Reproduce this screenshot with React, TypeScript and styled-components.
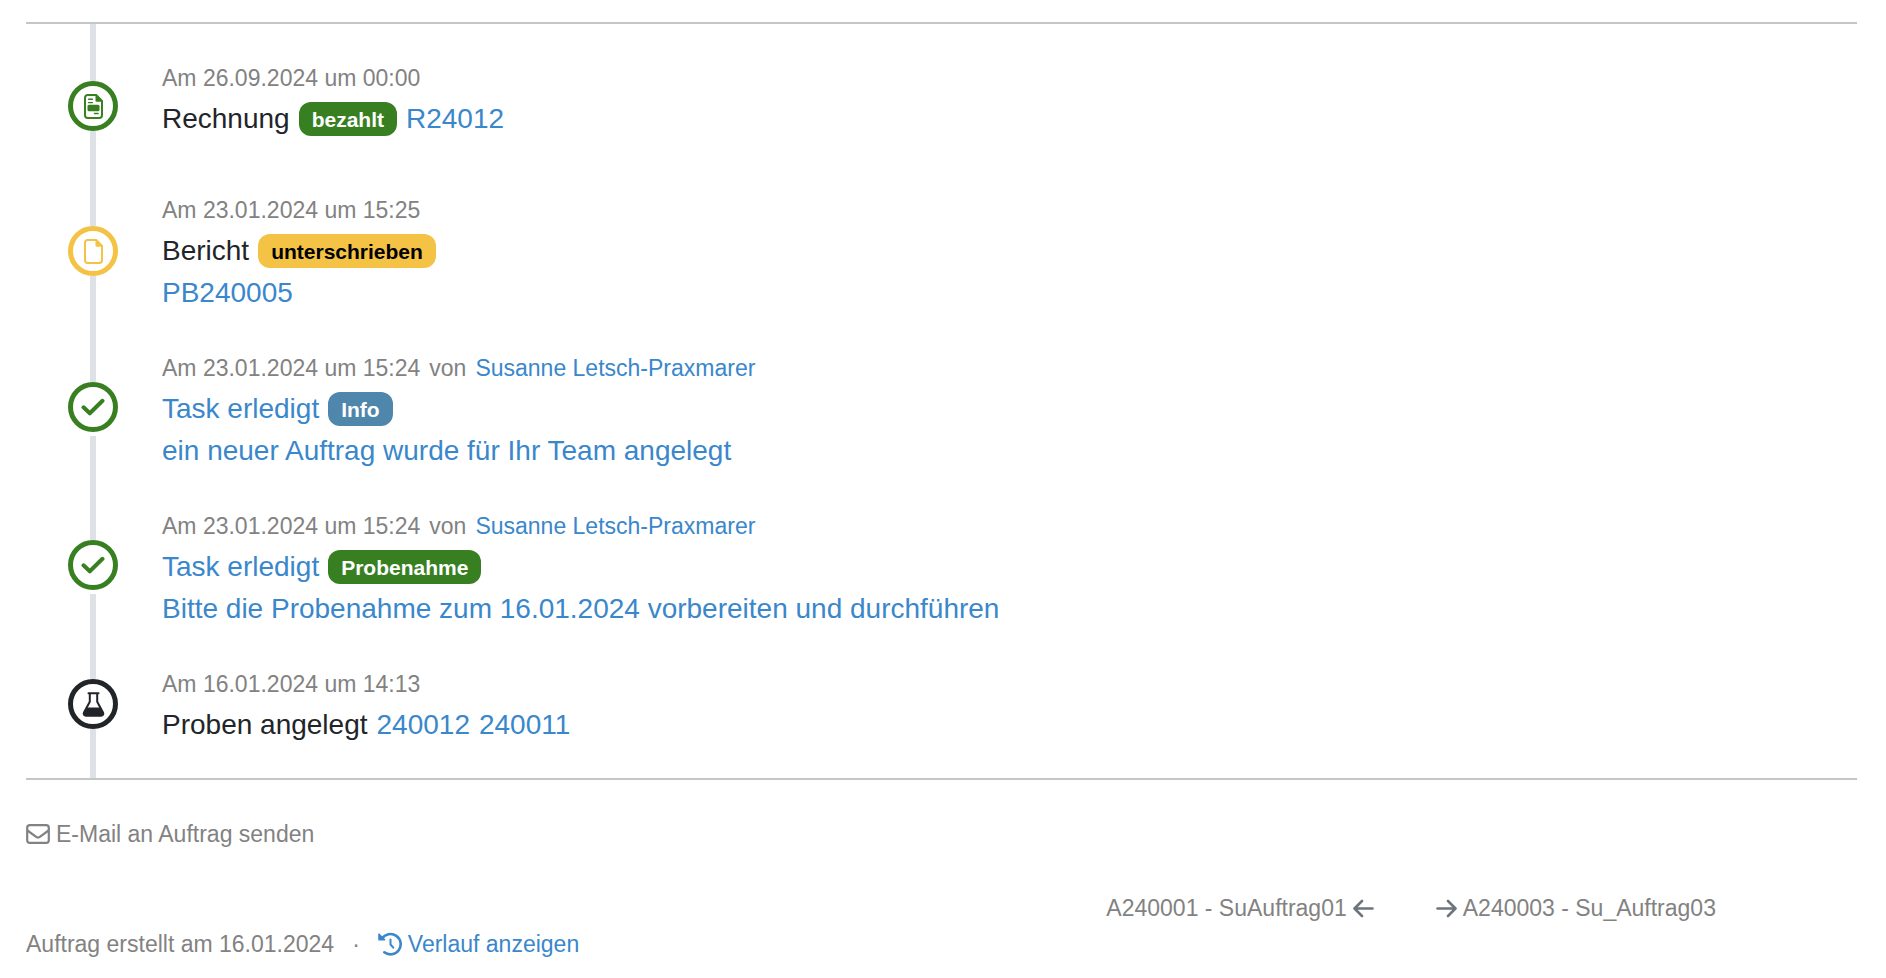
import React from "react";
import styled, { createGlobalStyle } from "styled-components";

const color = {
  text: "#212529",
  muted: "#828282",
  arrow: "#6c757d",
  link: "#3a87cb",
  rule: "#c6c6c6",
  rail: "#dee2e6",
  green: "#387f22",
  yellow: "#f4c244",
  blue: "#4f86ab",
};

const GlobalStyle = createGlobalStyle`
  * { box-sizing: border-box; }
  body {
    margin: 0;
    background: #fff;
    color: ${color.text};
    font-family: "Liberation Sans", Arial, Helvetica, sans-serif;
    font-size: 28px;
    line-height: 42px;
  }
`;

const Page = styled.main`
  padding: 22px 29px 0 26px;
`;

const Timeline = styled.ol`
  list-style: none;
  margin: 0;
  padding: 0 0 0 42px;
  border-top: 2px solid ${color.rule};
  border-bottom: 2px solid ${color.rule};
`;

const Entry = styled.li`
  display: flex;
  gap: 44px;
`;

const Rail = styled.div`
  display: flex;
  flex-direction: column;
  align-items: center;
  flex: none;
  width: 50px;
`;

const RailStart = styled.span<{ $length: number }>`
  width: 6px;
  height: ${(p) => p.$length}px;
  background: ${color.rail};
`;

const RailEnd = styled.span<{ $gap?: boolean }>`
  flex: 1;
  width: 6px;
  margin-top: ${(p) => (p.$gap ? 4 : 0)}px;
  background: ${color.rail};
`;

const Marker = styled.span<{ $color: string }>`
  display: flex;
  align-items: center;
  justify-content: center;
  width: 50px;
  height: 50px;
  border: 5px solid ${(p) => p.$color};
  border-radius: 50%;
  color: ${(p) => p.$color};
`;

const Content = styled.div<{ $top: number; $bottom: number }>`
  padding: ${(p) => p.$top}px 0 ${(p) => p.$bottom}px;
`;

const Line = styled.div`
  display: flex;
  flex-wrap: wrap;
  align-items: center;
  gap: 0 9px;
`;

const Meta = styled(Line)`
  padding-top: 2px;
  color: ${color.muted};
  font-size: 23px;
  line-height: 40px;
`;

const Link = styled.a`
  color: ${color.link};
  text-decoration: none;
`;

const Badge = styled.span<{ $bg: string; $fg?: string }>`
  padding: 7px 13px 6px;
  border-radius: 12px;
  background: ${(p) => p.$bg};
  color: ${(p) => p.$fg ?? "#fff"};
  font-size: 21px;
  font-weight: 700;
  line-height: 21px;
`;

const Footer = styled.footer`
  color: ${color.muted};
  font-size: 23px;
  line-height: 36px;
  padding-top: 36px;
`;

const FooterLink = styled.a<{ $color?: string }>`
  display: inline-flex;
  align-items: center;
  gap: 6px;
  color: ${(p) => p.$color ?? color.muted};
  text-decoration: none;
`;

const Columns = styled.div`
  display: grid;
  grid-template-columns: 1fr 1fr;
  gap: 22px;
  padding-top: 36px;
`;

const Created = styled.div`
  display: flex;
  align-items: center;
  gap: 18px;
  padding-top: 36px;
`;

const Pager = styled.nav`
  display: grid;
  grid-template-columns: 1fr 1fr;
  gap: 62px;
  align-items: start;
`;

const Previous = styled(FooterLink)`
  justify-self: end;
`;

const Next = styled(FooterLink)`
  justify-self: start;
`;

const FileOutline = () => (
  <>
    <path d="M3.700 1h8.500l5.800 5.800v14.500a2.700 2.700 0 0 1-2.700 2.700H3.700A2.700 2.700 0 0 1 1 21.300V3.700A2.700 2.700 0 0 1 3.700 1z" fill="none" stroke="currentColor" strokeWidth="2" />
    <path d="M11.500 .5l7 7.300h-5.500a1.500 1.500 0 0 1-1.500-1.500z" fill="currentColor" />
  </>
);

const FileIcon = () => (
  <svg width="19" height="25" viewBox="0 0 19 25" aria-hidden="true">
    <FileOutline />
  </svg>
);

const InvoiceIcon = () => (
  <svg width="19" height="25" viewBox="0 0 19 25" aria-hidden="true">
    <FileOutline />
    <path d="M4.500 5.200h4M4.500 8.600h4M10.500 19.500h3.600" stroke="currentColor" strokeWidth="1.400" strokeLinecap="round" />
    <rect x="3.500" y="10.800" width="12" height="6.400" rx="1.500" fill="currentColor" />
  </svg>
);

const CheckIcon = () => (
  <svg width="24" height="18" viewBox="0 0 24 18" aria-hidden="true">
    <path d="M2.500 9.300l6.300 6L21.500 2.800" fill="none" stroke="currentColor" strokeWidth="4" strokeLinecap="round" strokeLinejoin="round" />
  </svg>
);

const FlaskIcon = () => (
  <svg width="23" height="25" viewBox="0 0 23 25" aria-hidden="true">
    <path d="M6.500 1.200h10M7.800 1.200v8.500L2 20.500c-.9 1.800.2 3.300 2 3.300h15c1.800 0 2.900-1.500 2-3.300L15.200 9.700V1.200" fill="none" stroke="currentColor" strokeWidth="2" strokeLinecap="round" strokeLinejoin="round" />
    <path d="M4.300 15.500h14.400l2.500 5.500-1.200 3H3l-1.200-3z" fill="currentColor" />
  </svg>
);

const MailIcon = () => (
  <svg width="24" height="20" viewBox="0 0 24 20" fill="none" stroke="currentColor" strokeWidth="2.200" aria-hidden="true">
    <rect x="1.200" y="1.200" width="21.600" height="17.600" rx="2.600" />
    <path d="M1.500 6.500l8.300 6.200a3.700 3.700 0 0 0 4.400 0l8.300-6.200" />
  </svg>
);

const HistoryIcon = () => (
  <svg width="24" height="24" viewBox="0 0 24 24" fill="none" stroke="currentColor" strokeLinecap="round" strokeLinejoin="round" aria-hidden="true">
    <path d="M4 6.500a10.200 10.200 0 1 1 2.300 13.800" strokeWidth="2.600" />
    <path d="M1 2.200v5.600h5.600z" fill="currentColor" strokeWidth="1.600" />
    <path d="M12.500 7.500v5l2.800 3.200" strokeWidth="2" />
  </svg>
);

const ArrowIcon = ({ right }: { right?: boolean }) => (
  <svg width="21" height="19" viewBox="0 0 21 19" fill="none" stroke={color.arrow} strokeWidth="2.600" strokeLinecap="round" strokeLinejoin="round" aria-hidden="true">
    <path d={right ? "M1.500 9.500h18M12 2l7.500 7.500L12 17" : "M19.500 9.500h-18M9 2L1.500 9.500 9 17"} />
  </svg>
);

type EntryProps = {
  lead: number;
  top?: number;
  bottom?: number;
  gap?: boolean;
  tone: string;
  icon: React.ReactNode;
  date: string;
  author?: string;
  children: React.ReactNode;
};

const TimelineEntry = ({ lead, top = 1, bottom = 31, gap, tone, icon, date, author, children }: EntryProps) => (
  <Entry>
    <Rail>
      <RailStart $length={lead} />
      <Marker $color={tone}>{icon}</Marker>
      <RailEnd $gap={gap} />
    </Rail>
    <Content $top={top} $bottom={bottom}>
      <Meta>
        <time>{date}</time>
        {author && (
          <>
            <span>von</span>
            <Link href="#author">{author}</Link>
          </>
        )}
      </Meta>
      {children}
    </Content>
  </Entry>
);

export default function App() {
  return (
    <>
      <GlobalStyle />
      <Page>
        <Timeline>
          <TimelineEntry lead={57} top={32} bottom={47} tone={color.green} icon={<InvoiceIcon />} date="Am 26.09.2024 um 00:00">
            <Line>
              <span>Rechnung</span>
              <Badge $bg={color.green}>bezahlt</Badge>
              <Link href="#R24012">R24012</Link>
            </Line>
          </TimelineEntry>
          <TimelineEntry lead={39} tone={color.yellow} icon={<FileIcon />} date="Am 23.01.2024 um 15:25">
            <Line>
              <span>Bericht</span>
              <Badge $bg={color.yellow} $fg="#000">unterschrieben</Badge>
            </Line>
            <Line>
              <Link href="#PB240005">PB240005</Link>
            </Line>
          </TimelineEntry>
          <TimelineEntry lead={37} gap tone={color.green} icon={<CheckIcon />} date="Am 23.01.2024 um 15:24" author="Susanne Letsch-Praxmarer">
            <Line>
              <Link href="#task-info">Task erledigt</Link>
              <Badge $bg={color.blue}>Info</Badge>
            </Line>
            <Line>
              <Link href="#task-info">ein neuer Auftrag wurde für Ihr Team angelegt</Link>
            </Line>
          </TimelineEntry>
          <TimelineEntry lead={37} gap tone={color.green} icon={<CheckIcon />} date="Am 23.01.2024 um 15:24" author="Susanne Letsch-Praxmarer">
            <Line>
              <Link href="#task-probe">Task erledigt</Link>
              <Badge $bg={color.green}>Probenahme</Badge>
            </Line>
            <Line>
              <Link href="#task-probe">Bitte die Probenahme zum 16.01.2024 vorbereiten und durchführen</Link>
            </Line>
          </TimelineEntry>
          <TimelineEntry lead={18} bottom={32} tone={color.text} icon={<FlaskIcon />} date="Am 16.01.2024 um 14:13">
            <Line>
              <span>Proben angelegt</span>
              <Link href="#240012">240012</Link>
              <Link href="#240011">240011</Link>
            </Line>
          </TimelineEntry>
        </Timeline>
        <Footer>
          <FooterLink href="#mail">
            <MailIcon />
            E-Mail an Auftrag senden
          </FooterLink>
          <Columns>
            <Created>
              <span>Auftrag erstellt am 16.01.2024</span>
              <span>·</span>
              <FooterLink href="#history" $color={color.link}>
                <HistoryIcon />
                Verlauf anzeigen
              </FooterLink>
            </Created>
            <Pager>
              <Previous href="#A240001">
                A240001 - SuAuftrag01
                <ArrowIcon />
              </Previous>
              <Next href="#A240003">
                <ArrowIcon right />
                A240003 - Su_Auftrag03
              </Next>
            </Pager>
          </Columns>
        </Footer>
      </Page>
    </>
  );
}
